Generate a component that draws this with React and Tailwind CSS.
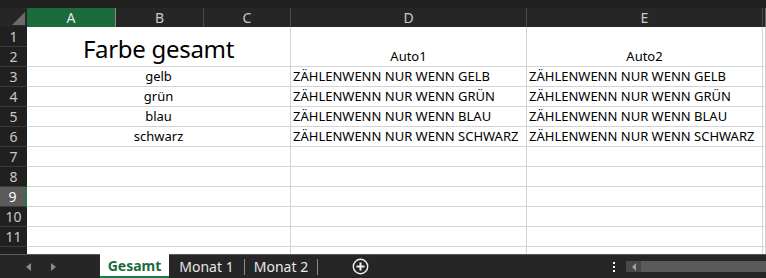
import React from "react";

const cols = ["A", "B", "C", "D", "E"];
const farben = ["gelb", "grün", "blau", "schwarz"];

function RowHead({ n, active = false }) {
  return (
    <div
      className={`flex items-center justify-center border-b border-[#3a3a3a] text-[14px] ${
        active ? "bg-[#5b5b5b] text-white border-r-2 border-r-[#1e7a45]" : "bg-[#202020] text-[#c9c9c9]"
      }`}
    >
      {n}
    </div>
  );
}

function Cell({ children, className = "" }) {
  return (
    <div className={`flex items-end overflow-hidden whitespace-nowrap border-r border-b border-[#d4d4d4] bg-white pb-[1px] text-[13px] leading-[17px] text-black ${className}`}>
      {children}
    </div>
  );
}

export default function App() {
  return (
    <div className="flex h-[278px] w-[766px] flex-col overflow-hidden bg-[#202020]" style={{ fontFamily: '"Noto Sans", "Open Sans", sans-serif' }}>
      <div className="h-[8px] bg-[#202020]" />

      <div className="grid flex-1 grid-cols-[27px_89px_88px_87px_236px_236px_1fr] grid-rows-[19px_repeat(12,20px)] overflow-hidden">
        {/* column headers */}
        <div className="relative bg-[#262626]">
          <div className="absolute bottom-[2px] right-[2px] h-0 w-0 border-b-[13px] border-l-[13px] border-b-[#6b6b6b] border-l-transparent" />
        </div>
        {cols.map((c, i) => (
          <div
            key={c}
            className={`flex items-center justify-center border-r text-[14px] ${
              i === 0 ? "bg-[#1b6b3c] text-[#e6e6e6] border-[#8a8a8a]" : "bg-[#262626] text-[#c9c9c9] border-[#4a4a4a]"
            }`}
          >
            {c}
          </div>
        ))}
        <div className="bg-[#262626] border-r border-[#6a6a6a]" />

        {/* row 1 + 2 */}
        <RowHead n={1} />
        <div className="col-span-3 row-span-2 flex items-center justify-center border-r border-b border-[#d4d4d4] bg-white pt-[4px] text-[24px] tracking-[-0.3px] text-black">
          Farbe gesamt
        </div>
        <Cell className="row-span-2 justify-center">Auto1</Cell>
        <Cell className="row-span-2 justify-center">Auto2</Cell>
        <div className="row-span-2 bg-white border-r border-b border-[#d4d4d4]" />

        <RowHead n={2} />

        {farben.map((f, i) => (
          <React.Fragment key={f}>
            <RowHead n={i + 3} />
            <Cell className="col-span-3 justify-center">{f}</Cell>
            <Cell className="pl-[2px]">ZÄHLENWENN NUR WENN {f.toUpperCase()}</Cell>
            <Cell className="pl-[2px]">ZÄHLENWENN NUR WENN {f.toUpperCase()}</Cell>
            <div className="bg-white border-r border-b border-[#d4d4d4]" />
          </React.Fragment>
        ))}

        {[7, 8, 9, 10, 11, 12].map((n) => (
          <React.Fragment key={n}>
            <RowHead n={n === 12 ? "" : n} active={n === 9} />
            <Cell className="col-span-3" />
            <Cell />
            <Cell />
            <div className="bg-white border-r border-b border-[#d4d4d4]" />
          </React.Fragment>
        ))}
      </div>

      {/* sheet tabs */}
      <div className="flex h-[24px] shrink-0 items-stretch border-t border-[#5a5a5a] bg-[#262626] text-[14px]">
        <div className="flex w-[100px] items-center gap-[20px] pl-[26px]">
          <span className="h-0 w-0 border-y-[4px] border-r-[5px] border-y-transparent border-r-[#8a8a8a]" />
          <span className="h-0 w-0 border-y-[4px] border-l-[5px] border-y-transparent border-l-[#8a8a8a]" />
        </div>
        <div className="-mt-px flex w-[69px] items-center justify-center border-b-2 border-[#1e7a45] bg-white font-bold text-[#1d6b3e]">
          Gesamt
        </div>
        <div className="flex w-[76px] items-center justify-center text-[#e8e8e8]">
          <span className="flex-1 text-center">Monat 1</span>
          <span className="h-[16px] w-px bg-[#8a8a8a]" />
        </div>
        <div className="flex w-[73px] items-center justify-center text-[#e8e8e8]">
          <span className="flex-1 text-center">Monat 2</span>
          <span className="h-[16px] w-px bg-[#8a8a8a]" />
        </div>
        <div className="flex w-[84px] items-center justify-center">
          <svg width="17" height="17" viewBox="0 0 17 17">
            <circle cx="8.5" cy="8.5" r="7.2" fill="none" stroke="#f0f0f0" strokeWidth="1.4" />
            <path d="M8.5 4.5v8M4.5 8.5h8" stroke="#f0f0f0" strokeWidth="2" />
          </svg>
        </div>
        <div className="flex-1" />
        <div className="flex w-[24px] flex-col items-center justify-center gap-[2px]">
          <span className="h-[2px] w-[2px] bg-white" />
          <span className="h-[2px] w-[2px] bg-white" />
          <span className="h-[2px] w-[2px] bg-white" />
        </div>
        <div className="flex w-[140px] items-center py-[6px]">
          <div className="flex h-full w-[15px] items-center justify-center bg-[#484848]">
            <span className="h-0 w-0 border-y-[4px] border-r-[4px] border-y-transparent border-r-[#a0a0a0]" />
          </div>
          <div className="h-full flex-1 bg-[#5a5a5a]" />
        </div>
      </div>
    </div>
  );
}
